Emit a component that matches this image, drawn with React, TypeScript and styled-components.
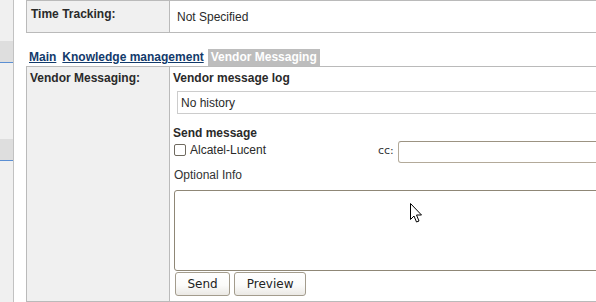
import React from "react";
import styled, { createGlobalStyle } from "styled-components";

const GlobalStyle = createGlobalStyle`
  html, body { margin: 0; padding: 0; background: #ffffff; }
  body {
    font-family: "Liberation Sans", Arial, sans-serif;
    font-size: 12px;
    color: #222222;
    overflow: hidden;
  }
`;

const Page = styled.div`
  position: relative;
  display: flex;
  width: 596px;
  height: 302px;
  overflow: hidden;
  background: #ffffff;
`;

const Sidebar = styled.div`
  flex: 0 0 13px;
  display: flex;
  flex-direction: column;
  background: #f0f0f0;
  border-right: 1px solid #c2c2c2;
`;

const SideItem = styled.div<{ $gap: number }>`
  margin-top: ${(p) => p.$gap}px;
  height: 21px;
  background: #dedede;
  border-bottom: 1px solid #5b8fd3;
`;

const Gutter = styled.div`
  flex: 0 0 12px;
  background: #ffffff;
`;

const Content = styled.div`
  flex: 1;
  min-width: 0;
  display: flex;
  flex-direction: column;
`;

const Table = styled.div<{ $grow?: boolean }>`
  display: flex;
  width: 640px;
  flex: ${(p) => (p.$grow ? "1" : "0 0 auto")};
  border: 1px solid #bababa;
  border-right: none;
`;

const LabelCell = styled.div<{ $padTop: number; $padLeft: number }>`
  flex: 0 0 143px;
  background: #f0f0f0;
  border-right: 1px solid #bababa;
  padding: ${(p) => p.$padTop}px 0 0 ${(p) => p.$padLeft}px;
  box-sizing: border-box;
  font-weight: bold;
  font-size: 12px;
  color: #2a2a2a;
`;

const ValueCell = styled.div`
  flex: 1;
  height: 31px;
  display: flex;
  align-items: center;
  padding-left: 7px;
  font-size: 12px;
  color: #2a2a2a;
`;

const TabBar = styled.div`
  display: flex;
  align-items: flex-end;
  gap: 2px;
  height: 17px;
  padding: 16px 0 0 1px;
`;

const TabLink = styled.a`
  padding: 0 2px;
  line-height: 17px;
  font-weight: bold;
  font-size: 12px;
  color: #123a6b;
  text-decoration: underline;
  cursor: pointer;
`;

const ActiveTab = styled.span`
  padding: 0 3px;
  line-height: 17px;
  font-weight: bold;
  font-size: 12px;
  color: #ffffff;
  background: #bdbdbd;
`;

const MessageCell = styled.div`
  flex: 1;
  display: flex;
  flex-direction: column;
  align-items: flex-start;
  padding: 4px 0 0 3px;
`;

const SectionTitle = styled.div<{ $gap?: number }>`
  margin-top: ${(p) => p.$gap ?? 0}px;
  font-weight: bold;
  font-size: 12px;
  color: #2a2a2a;
`;

const HistoryBox = styled.div`
  margin: 6px 0 0 4px;
  width: 520px;
  padding: 4px 0 0 3px;
  box-sizing: border-box;
  height: 23px;
  border: 1px solid #cccccc;
  font-size: 12px;
  color: #2a2a2a;
`;

const RecipientRow = styled.div`
  display: flex;
  align-items: flex-start;
  margin-top: 1px;
`;

const CheckGroup = styled.label`
  flex: 0 0 205px;
  display: flex;
  align-items: flex-start;
  font-size: 12px;
  color: #2a2a2a;
`;

const Check = styled.input`
  appearance: none;
  margin: 3px 0 0 1px;
  width: 12px;
  height: 12px;
  box-sizing: border-box;
  border: 1px solid #6f6a5f;
  border-radius: 2px;
  background: #ffffff;
`;

const CheckText = styled.span`
  margin: 2px 0 0 4px;
`;

const CcLabel = styled.span`
  margin-top: 3px;
  font-family: "DejaVu Sans", sans-serif;
  font-size: 11px;
  color: #333333;
`;

const CcInput = styled.input`
  margin-left: 4px;
  width: 260px;
  height: 22px;
  box-sizing: border-box;
  border: 1px solid #b3aa9a;
  border-top-color: #9c9382;
  border-radius: 3px;
  background: #ffffff;
`;

const FieldLabel = styled.div`
  margin: 5px 0 0 1px;
  font-size: 12px;
  color: #333333;
`;

const MessageArea = styled.textarea`
  margin: 8px 0 0 1px;
  width: 500px;
  height: 81px;
  box-sizing: border-box;
  border: 1px solid #8f8776;
  border-radius: 3px;
  resize: none;
  background: #ffffff;
`;

const ButtonRow = styled.div`
  display: flex;
  gap: 4px;
  margin: 1px 0 0 2px;
`;

const Button = styled.button`
  height: 24px;
  padding: 0 11.5px;
  border: 1px solid #a39c8d;
  border-radius: 3px;
  background: linear-gradient(#ffffff 0%, #fbfbfa 55%, #ebe9e5 100%);
  font-family: "DejaVu Sans", sans-serif;
  font-size: 12px;
  color: #222222;
`;

const Pointer = styled.svg`
  position: absolute;
  left: 409px;
  top: 202px;
`;

export default function App() {
  return (
    <>
      <GlobalStyle />
      <Page>
        <Sidebar>
          <SideItem $gap={41} />
          <SideItem $gap={76} />
        </Sidebar>
        <Gutter />
        <Content>
          <Table>
            <LabelCell $padTop={6} $padLeft={4}>Time Tracking:</LabelCell>
            <ValueCell>Not Specified</ValueCell>
          </Table>
          <TabBar>
            <TabLink>Main</TabLink>
            <TabLink>Knowledge management</TabLink>
            <ActiveTab>Vendor Messaging</ActiveTab>
          </TabBar>
          <Table $grow>
            <LabelCell $padTop={4} $padLeft={3}>Vendor Messaging:</LabelCell>
            <MessageCell>
              <SectionTitle>Vendor message log</SectionTitle>
              <HistoryBox>No history</HistoryBox>
              <SectionTitle $gap={12}>Send message</SectionTitle>
              <RecipientRow>
                <CheckGroup>
                  <Check type="checkbox" />
                  <CheckText>Alcatel-Lucent</CheckText>
                </CheckGroup>
                <CcLabel>cc:</CcLabel>
                <CcInput type="text" />
              </RecipientRow>
              <FieldLabel>Optional Info</FieldLabel>
              <MessageArea />
              <ButtonRow>
                <Button>Send</Button>
                <Button>Preview</Button>
              </ButtonRow>
            </MessageCell>
          </Table>
        </Content>
        <Pointer width="14" height="22" viewBox="0 0 14 22">
          <path
            d="M1.5 1.5 L1.5 17.5 L5 14 L7.5 20 L10 19 L7.5 13 L12.5 13 Z"
            fill="#ffffff"
            stroke="#000000"
            strokeWidth="1"
            strokeLinejoin="miter"
          />
        </Pointer>
      </Page>
    </>
  );
}
